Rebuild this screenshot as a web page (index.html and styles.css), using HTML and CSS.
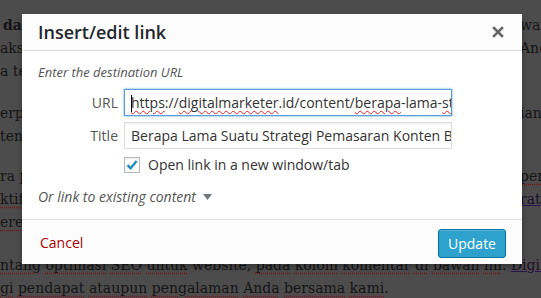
FILE: index.html
```html
<!DOCTYPE html>
<html lang="id">
<head>
  <meta charset="UTF-8" />
  <meta name="viewport" content="width=device-width, initial-scale=1.0"/>
  <title>Insert/edit link</title>
  <link rel="stylesheet" href="styles.css">
</head>
<body>

  <!-- Halaman artikel di belakang (diredupkan) -->
  <div class="page">
    <div class="para p1">
      <div class="line"><span class="l"><b>dalam Strategi Pemasaran Konten</b></span><span class="r">wan</span></div>
      <div class="line"><span class="l">aksi nyata agar hasil yang Anda harapkan</span><span class="r">Anda</span></div>
      <div class="line"><span class="l">a terlihat dengan jelas</span></div>
    </div>
    <div class="para p2">
      <div class="line"><span class="l">erpengaruh pada hasil yang akan</span><span class="r">ian</span></div>
      <div class="line"><span class="l">ten yang Anda buat</span></div>
    </div>
    <div class="para p3">
      <div class="line"><span class="l">ra pelan namun pasti</span><span class="r"><span class="sp">per</span></span></div>
      <div class="line"><span class="l"><span class="sp">ktif</span> dalam jangka panjang</span><span class="r"><a class="link" href="#">rategi</a></span></div>
      <div class="line"><span class="l"><span class="sp">erevolusi</span> sesuai kebutuhan</span></div>
    </div>
    <div class="para p4">
      <div class="line full"><span class="sp">ntang</span> <span class="sp">optimasi</span> <span class="sp">SEO</span> <span class="sp">untuk</span> website, <span class="sp">pada</span> <span class="sp">kolom</span> <span class="sp">komentar</span> <span class="sp">di</span> <span class="sp">bawah</span> <span class="sp">ini</span>. <a class="link" href="#">Digital</a></div>
      <div class="line full"><span class="sp">gi</span> <span class="sp">pendapat</span> <span class="sp">ataupun</span> <span class="sp">pengalaman</span> <span class="sp">Anda</span> <span class="sp">bersama</span> <span class="sp">kami</span>.</div>
    </div>
  </div>

  <!-- Dialog Insert/edit link -->
  <div class="modal">
    <div class="modal-head">
      <h1 class="modal-title">Insert/edit link</h1>
      <button class="close" aria-label="Close">
        <svg width="12" height="12" viewBox="0 0 12 12">
          <path d="M2 2 L10 10 M10 2 L2 10" stroke="#666" stroke-width="2.6" stroke-linecap="square"/>
        </svg>
      </button>
    </div>

    <div class="modal-body">
      <p class="hint">Enter the destination URL</p>
      <div class="fields">
        <label class="lbl">URL</label>
        <div class="field focus"><span class="caret"></span><span class="sq">https</span>://<span class="sq">digitalmarketer</span>.id/content/<span class="sq">berapa</span>-lama-<span class="sq">strategi</span></div>
        <label class="lbl">Title</label>
        <div class="field">Berapa Lama Suatu Strategi Pemasaran Konten Berhasil</div>
        <div class="check-row">
          <span class="checkbox">
            <svg width="14" height="14" viewBox="0 0 14 14">
              <path d="M2.5 7.2 L5.6 10.2 L11.6 3" fill="none" stroke="#1e8cbe" stroke-width="2.4"/>
            </svg>
          </span>
          <span>Open link in a new window/tab</span>
        </div>
      </div>
      <div class="existing">
        Or link to existing content
        <svg width="9" height="6" viewBox="0 0 9 6"><polygon points="0,0 9,0 4.5,6" fill="#72777c"/></svg>
      </div>
    </div>

    <div class="modal-foot">
      <a class="cancel" href="#">Cancel</a>
      <button class="btn-primary">Update</button>
    </div>
  </div>

</body>
</html>
```

FILE: styles.css
```css
/* ======= Фон: страница под затемнением ======= */
html, body {
  margin: 0;
  padding: 0;
}
body {
  background-color: #4c4c4c;
  width: 541px;
  height: 298px;
  overflow: hidden;
  position: relative;
  font-family: "DejaVu Serif", serif;
  font-size: 14px;
  color: #141414;
}

.page {
  padding-top: 14px;
}
.para {
  line-height: 23px;
}
.p2 { margin-top: 19px; }
.p3 { margin-top: 17px; }
.p4 { margin-top: 20px; }

.line {
  display: grid;
  grid-template-columns: 520px auto;
  white-space: nowrap;
}
.line .l {
  overflow: hidden;
}
.p1 .line:first-child .l {
  padding-left: 3px;
}
.line.full {
  display: block;
}
.sp {
  text-decoration: underline dotted #7a1414;
  text-underline-offset: 3px;
}
.link {
  color: #1c0e2a;
  text-decoration: underline;
  text-decoration-color: #2a1550;
}

/* ======= Диалог ======= */
.modal {
  position: absolute;
  left: 22px;
  top: 14px;
  width: 500px;
  height: 250px;
  background: #fff;
  box-shadow: 0 3px 6px rgba(0, 0, 0, 0.3);
  display: flex;
  flex-direction: column;
  font-family: "Open Sans", sans-serif;
  color: #333;
}

.modal-head {
  height: 36px;
  background: #fcfcfc;
  border-bottom: 1px solid #ddd;
  display: flex;
  align-items: center;
  justify-content: space-between;
  padding: 0 18px 0 16px;
}
.modal-title {
  margin: 0;
  font-size: 18px;
  font-weight: 600;
  color: #23282d;
  line-height: 1;
}
.close {
  border: 0;
  background: none;
  padding: 0;
  display: flex;
}

.modal-body {
  flex: 1;
  padding: 12px 16px 0;
}
.hint {
  margin: 0;
  font-size: 13px;
  font-style: italic;
  color: #555;
  line-height: 18px;
}

.fields {
  display: grid;
  grid-template-columns: 80px 328px;
  column-gap: 6px;
  row-gap: 6px;
  margin-top: 8px;
  align-items: center;
}
.lbl {
  text-align: right;
  font-size: 14px;
  color: #555;
}
.field {
  height: 25px;
  border: 1px solid #ddd;
  box-shadow: inset 0 1px 2px rgba(0, 0, 0, 0.07);
  padding: 0 6px;
  font-size: 14px;
  line-height: 25px;
  color: #333;
  white-space: nowrap;
  overflow: hidden;
}
.field.focus {
  border-color: #5b9dd9;
  box-shadow: 0 0 2px rgba(30, 140, 190, 0.8);
}
.caret {
  display: inline-block;
  width: 1px;
  height: 17px;
  background: #000;
  vertical-align: -4px;
  margin-right: -1px;
}
.sq {
  text-decoration: underline wavy #e02020;
  text-decoration-thickness: 1px;
  text-underline-offset: 2px;
}

.check-row {
  grid-column: 2;
  display: flex;
  align-items: center;
  gap: 8px;
  margin-top: 0;
  font-size: 14px;
  color: #333;
}
.checkbox {
  width: 14px;
  height: 14px;
  border: 1px solid #b4b9be;
  box-shadow: inset 0 1px 2px rgba(0, 0, 0, 0.1);
  display: flex;
}

.existing {
  margin-top: 14px;
  font-size: 14px;
  font-style: italic;
  color: #555;
  line-height: 18px;
  display: flex;
  align-items: center;
  gap: 7px;
}

.modal-foot {
  height: 44px;
  border-top: 1px solid #ddd;
  background: #fcfcfc;
  display: flex;
  align-items: center;
  justify-content: space-between;
  padding: 0 16px 0 18px;
}
.cancel {
  color: #a00;
  text-decoration: none;
  font-size: 14px;
}
.btn-primary {
  width: 68px;
  height: 29px;
  margin-top: 2px;
  background: #2ea2cc;
  border: 1px solid #0074a2;
  border-radius: 3px;
  box-shadow: inset 0 1px 0 rgba(120, 200, 230, 0.5);
  color: #fff;
  font-family: "Open Sans", sans-serif;
  font-size: 14px;
  padding: 0;
}
```
